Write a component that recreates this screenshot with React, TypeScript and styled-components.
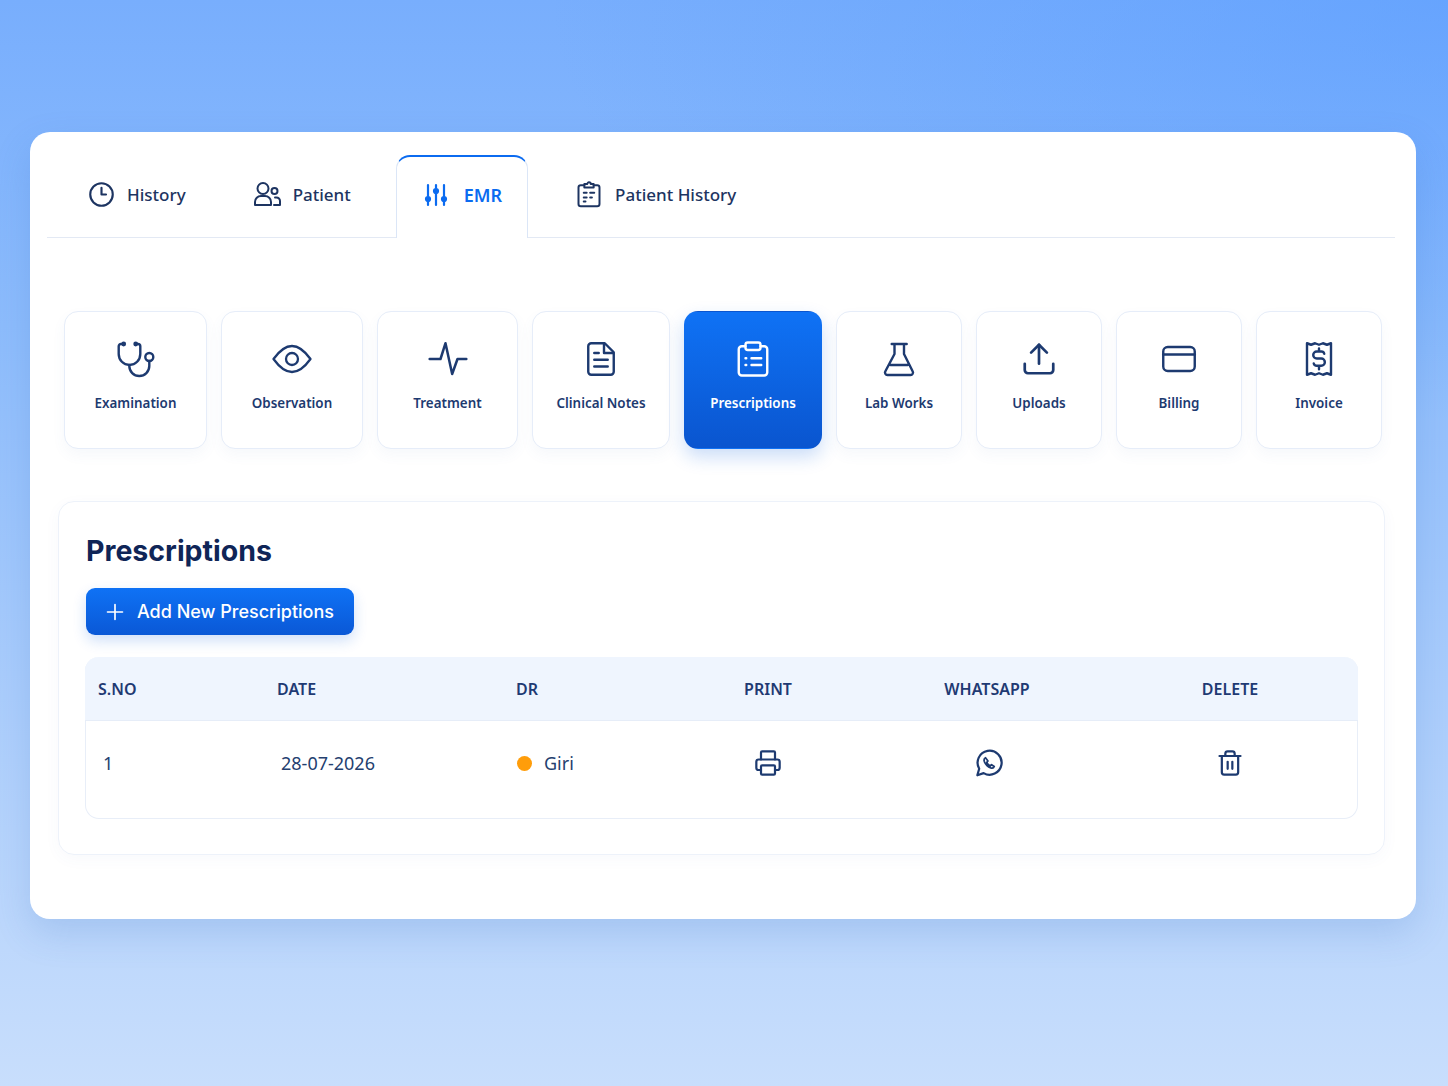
import type { ReactNode } from 'react';
import styled, { createGlobalStyle } from 'styled-components';
import { Clock3, Printer, Trash2, Upload } from 'lucide-react';

const GlobalStyle = createGlobalStyle`
  html, body {
    margin: 0;
    padding: 0;
  }

  body {
    font-family: Inter, "Noto Sans", sans-serif;
    color: #1d3461;
  }
`;

type IconProps = { size?: number; stroke?: number };

const Svg = ({ size = 24, stroke = 2, box = 24, children }: IconProps & { box?: number; children: ReactNode }) => (
  <svg
    width={size}
    height={size}
    viewBox={`0 0 ${box} ${box}`}
    fill="none"
    stroke="currentColor"
    strokeWidth={stroke}
    strokeLinecap="round"
    strokeLinejoin="round"
  >
    {children}
  </svg>
);

const PatientIcon = () => (
  <Svg size={28} box={28} stroke={2}>
    <circle cx="10" cy="8.500" r="5.500" />
    <path d="M2 25v-3a6 6 0 0 1 6-6h4a6 6 0 0 1 6 6v3z" />
    <circle cx="21.500" cy="11" r="3" />
    <path d="M22 17.500h1.500a3.500 3.500 0 0 1 3.500 3.500v4h-6" />
  </Svg>
);

const SlidersIcon = () => (
  <Svg size={24} stroke={2.200}>
    <path d="M4 2v11M4 19v3M12 2v3M12 11v11M20 2v11M20 19v3" />
    <circle cx="4" cy="16" r="2" fill="currentColor" />
    <circle cx="12" cy="8" r="2" fill="currentColor" />
    <circle cx="20" cy="16" r="2" fill="currentColor" />
  </Svg>
);

const ClipboardHistoryIcon = () => (
  <Svg size={28} stroke={1.700}>
    <path d="M8 4.500H5a2 2 0 0 0-2 2v14a2 2 0 0 0 2 2h14a2 2 0 0 0 2-2v-14a2 2 0 0 0-2-2h-3" />
    <path d="M8 6.500v-3h2.500a1.500 1.500 0 0 1 3 0H16v3z" />
    <path d="M7.500 11h2.500M13 11h3.500M7.500 15h2.500M13 15h1.500M7.500 18.500h1.500" />
  </Svg>
);

const StethoscopeIcon = () => (
  <Svg size={40} box={40} stroke={2.400}>
    <path d="M7.700 5H5a2.300 2.300 0 0 0-2.300 2.300V15a10.800 11 0 0 0 21.600 0V7.300A2.300 2.300 0 0 0 22 5h-2.300" />
    <path d="M13.300 26v1a10 10 0 0 0 20 0v-5" />
    <circle cx="33.300" cy="18" r="4" />
    <circle cx="7.700" cy="5" r="1.200" fill="currentColor" />
    <circle cx="19.700" cy="5" r="1.200" fill="currentColor" />
  </Svg>
);

const EyeIcon = () => (
  <Svg size={40} box={40} stroke={2.300}>
    <path d="M1.500 20C8 11 14 7 20 7s12 4 18.500 13C32 29 26 33 20 33S8 29 1.500 20z" />
    <circle cx="20" cy="20" r="6" />
  </Svg>
);

const PulseIcon = () => (
  <Svg size={40} stroke={1.500}>
    <path d="M1 12h6.500l3-9.500 4 18.500 3.200-9H23" />
  </Svg>
);

const NoteIcon = () => (
  <Svg size={36} stroke={1.600}>
    <path d="M5.500 1.500h9l6 6v13a2 2 0 0 1-2 2h-13a2 2 0 0 1-2-2v-17a2 2 0 0 1 2-2z" />
    <path d="M14 2v6h6M7.500 8h3M7.500 12.500h9M7.500 17h9" />
  </Svg>
);

const ClipboardListIcon = () => (
  <Svg size={36} stroke={1.600}>
    <path d="M7 3.500H4.500a2 2 0 0 0-2 2V21a2 2 0 0 0 2 2h15a2 2 0 0 0 2-2V5.500a2 2 0 0 0-2-2H17" />
    <rect x="7" y="1" width="10" height="5" rx="1.500" />
    <path d="M7 11.500h.5M11 11.500h6.500M7 16h.5M11 16h6.500" />
  </Svg>
);

const FlaskIcon = () => (
  <Svg size={40} box={40} stroke={2.400}>
    <path d="M12.700 5h15M15.500 5v10L6.500 32a2.500 2.500 0 0 0 2.200 4h22.600a2.500 2.500 0 0 0 2.200-4L25 15V5M11.500 26h17" />
  </Svg>
);

const CardIcon = () => (
  <Svg size={36} stroke={1.600}>
    <rect x="1.500" y="4" width="21" height="16" rx="3" />
    <path d="M1.500 9h21" />
  </Svg>
);

const ReceiptIcon = () => (
  <Svg size={36} stroke={1.600}>
    <path d="M4 1.500l2.700 1 2.700-1 2.600 1 2.600-1 2.700 1 2.700-1v21l-2.700-1-2.700 1-2.600-1-2.600 1-2.700-1-2.700 1z" />
    <path d="M15.500 8.500a2 2 0 0 0-2-1.500h-3a2.300 2.300 0 0 0 0 4.700h3a2.400 2.400 0 0 1 0 4.800h-3a2 2 0 0 1-2-1.500M12 5v2M12 16.500v2.300" />
  </Svg>
);

const WhatsappIcon = () => (
  <Svg size={28} stroke={1.900}>
    <path d="M2 22.500l1.600-5.600A10.300 10.300 0 1 1 7.400 20.700z" />
    <path
      d="M9 7.500c-1 .5-1.500 1.700-1 3.200 1 2.600 3 4.700 5.500 5.500 1.400.4 2.600-.1 3-1.200l-2.300-1.500-1.100 1c-1.300-.6-2.400-1.800-3-3.100l1-1.100z"
      strokeWidth={1.500}
    />
  </Svg>
);

const PlusIcon = () => (
  <Svg size={20} stroke={2}>
    <path d="M12 3v18M3 12h18" />
  </Svg>
);

const tabs = [
  { label: 'History', icon: <Clock3 size={27} strokeWidth={1.900} />, after: 15 },
  { label: 'Patient', icon: <PatientIcon />, after: 19 },
  { label: 'EMR', icon: <SlidersIcon />, active: true, after: 21 },
  { label: 'Patient History', icon: <ClipboardHistoryIcon />, after: 0 },
];

const tiles = [
  { label: 'Examination', width: 143, icon: <StethoscopeIcon /> },
  { label: 'Observation', width: 142, icon: <EyeIcon /> },
  { label: 'Treatment', width: 141, icon: <PulseIcon /> },
  { label: 'Clinical Notes', width: 138, icon: <NoteIcon /> },
  { label: 'Prescriptions', width: 138, icon: <ClipboardListIcon />, active: true },
  { label: 'Lab Works', width: 126, icon: <FlaskIcon /> },
  { label: 'Uploads', width: 126, icon: <Upload size={38} strokeWidth={1.700} /> },
  { label: 'Billing', width: 126, icon: <CardIcon /> },
  { label: 'Invoice', width: 126, icon: <ReceiptIcon /> },
];

const App = () => (
  <Page>
    <GlobalStyle />
    <Card>
      <TabBar>
        {tabs.map((tab) => (
          <Tab key={tab.label} $active={tab.active} $after={tab.after}>
            <TabIcon>{tab.icon}</TabIcon>
            <span>{tab.label}</span>
          </Tab>
        ))}
      </TabBar>

      <TileRow>
        {tiles.map((tile) => (
          <Tile key={tile.label} $active={tile.active} $width={tile.width}>
            <TileIcon>{tile.icon}</TileIcon>
            <TileLabel>{tile.label}</TileLabel>
          </Tile>
        ))}
      </TileRow>

      <Panel>
        <Title>Prescriptions</Title>
        <AddButton>
          <PlusIcon />
          Add New Prescriptions
        </AddButton>
        <Table>
          <HeadRow>
            <HeadCell>S.NO</HeadCell>
            <HeadCell>DATE</HeadCell>
            <HeadCell>DR</HeadCell>
            <HeadCell $center>PRINT</HeadCell>
            <HeadCell $center>WHATSAPP</HeadCell>
            <HeadCell $center>DELETE</HeadCell>
          </HeadRow>
          <BodyRow>
            <NumberCell>1</NumberCell>
            <DateCell>28-07-2026</DateCell>
            <DoctorCell>
              <StatusDot />
              Giri
            </DoctorCell>
            <ActionCell>
              <Printer size={28} strokeWidth={1.900} />
            </ActionCell>
            <ActionCell $shift={3}>
              <WhatsappIcon />
            </ActionCell>
            <ActionCell>
              <Trash2 size={28} strokeWidth={1.900} />
            </ActionCell>
          </BodyRow>
        </Table>
      </Panel>
    </Card>
  </Page>
);

export default App;

const Page = styled.div`
  box-sizing: border-box;
  min-height: 1086px;
  padding: 132px 32px 0 30px;
  background:
    radial-gradient(900px 420px at 100% 0%, rgba(88, 156, 255, 0.55), rgba(88, 156, 255, 0)),
    linear-gradient(180deg, #78aefd 0%, #8dbcfc 30%, #b0d0fc 70%, #c8defc 100%);
`;

const Card = styled.main`
  box-sizing: border-box;
  height: 787px;
  padding: 23px 21px 0 17px;
  border-radius: 20px;
  background: #fff;
  box-shadow: 0 14px 36px rgba(52, 105, 190, 0.18);
`;

const TabBar = styled.nav`
  display: flex;
  height: 82px;
  padding-left: 14px;
  border-bottom: 1px solid #e3e9f4;
`;

const Tab = styled.div<{ $active?: boolean; $after: number }>`
  box-sizing: border-box;
  display: flex;
  align-items: center;
  gap: ${(p) => (p.$active ? 14 : 12)}px;
  height: ${(p) => (p.$active ? 83 : 82)}px;
  margin-right: ${(p) => p.$after}px;
  padding: 0 25px 5px;
  font-family: "Noto Sans", sans-serif;
  font-size: ${(p) => (p.$active ? 18 : 17)}px;
  font-weight: ${(p) => (p.$active ? 600 : 500)};
  color: ${(p) => (p.$active ? '#0b6bf0' : '#1d3461')};
  background: ${(p) => (p.$active ? '#fff' : 'transparent')};
  border: 1px solid ${(p) => (p.$active ? '#dbe6f7' : 'transparent')};
  border-bottom: none;
  border-top: ${(p) => (p.$active ? '2px solid #0b6bf0' : '1px solid transparent')};
  border-radius: 14px 14px 0 0;
`;

const TabIcon = styled.div`
  display: flex;
  align-items: center;
  justify-content: center;
  width: 28px;
  height: 28px;
`;

const TileRow = styled.div`
  display: flex;
  gap: 14px;
  margin: 73px 0 0 17px;
`;

const Tile = styled.div<{ $active?: boolean; $width: number }>`
  box-sizing: border-box;
  display: flex;
  flex-direction: column;
  align-items: center;
  width: ${(p) => p.$width}px;
  height: 138px;
  padding-top: 25px;
  border-radius: 14px;
  color: ${(p) => (p.$active ? '#fff' : '#1d3a70')};
  background: ${(p) => (p.$active ? 'linear-gradient(180deg, #0f72f5 0%, #0a55cf 100%)' : '#fff')};
  border: 1px solid ${(p) => (p.$active ? 'transparent' : '#e6edf9')};
  box-shadow: ${(p) =>
    p.$active ? '0 8px 18px rgba(20, 100, 225, 0.22)' : '0 6px 14px rgba(70, 110, 180, 0.05)'};
`;

const TileIcon = styled.div`
  display: flex;
  align-items: center;
  justify-content: center;
  width: 44px;
  height: 44px;
`;

const TileLabel = styled.div`
  margin-top: 12px;
  font-family: "Noto Sans", sans-serif;
  font-size: 13.400px;
  font-weight: 600;
  line-height: 20px;
`;

const Panel = styled.section`
  box-sizing: border-box;
  width: 1327px;
  height: 354px;
  margin: 52px 0 0 11px;
  padding: 29px 26px 0 27px;
  border: 1px solid #edf2fa;
  border-radius: 16px;
  box-shadow: 0 4px 16px rgba(70, 110, 180, 0.04);
`;

const Title = styled.h1`
  margin: 0;
  font-size: 28.500px;
  font-weight: 700;
  line-height: 40px;
  color: #0f2557;
`;

const AddButton = styled.button`
  display: flex;
  align-items: center;
  gap: 12px;
  width: 268px;
  height: 47px;
  margin-top: 17px;
  padding: 0 0 0 19px;
  border: none;
  border-radius: 9px;
  font-family: inherit;
  font-size: 18px;
  font-weight: 500;
  color: #fff;
  background: linear-gradient(180deg, #0f72f5 0%, #0a58d6 100%);
  box-shadow: 0 6px 14px rgba(20, 100, 225, 0.2);
`;

const Table = styled.div`
  box-sizing: border-box;
  height: 162px;
  margin-top: 22px;
  margin-left: -1px;
  border: 1px solid #e8eef8;
  border-top: none;
  border-radius: 14px;
`;

const HeadRow = styled.div`
  display: grid;
  grid-template-columns: 179px 239px 152px 200px 238px 248px;
  align-items: center;
  height: 63px;
  margin: 0 -1px;
  padding-left: 13px;
  background: #eff5fe;
  border-bottom: 1px solid #e6edf8;
  border-radius: 14px 14px 0 0;
`;

const HeadCell = styled.div<{ $center?: boolean }>`
  font-family: "Noto Sans", sans-serif;
  font-size: 16px;
  font-weight: 600;
  color: #1f3a73;
  text-align: ${(p) => (p.$center ? 'center' : 'left')};
`;

const BodyRow = styled.div`
  display: grid;
  grid-template-columns: 179px 239px 152px 200px 238px 248px;
  align-items: center;
  height: 84px;
  padding-left: 12px;
  font-family: "Noto Sans", sans-serif;
  font-size: 18px;
  color: #24406f;
`;

const NumberCell = styled.div`
  padding-left: 5px;
`;

const DateCell = styled.div`
  padding-left: 4px;
`;

const DoctorCell = styled.div`
  display: flex;
  align-items: center;
  gap: 12px;
  padding-left: 1px;
`;

const StatusDot = styled.span`
  width: 15px;
  height: 15px;
  border-radius: 50%;
  background: #ff9d0a;
`;

const ActionCell = styled.div<{ $shift?: number }>`
  display: flex;
  justify-content: center;
  padding-left: ${(p) => p.$shift ?? 0}px;
  color: #1d3a70;
`;
